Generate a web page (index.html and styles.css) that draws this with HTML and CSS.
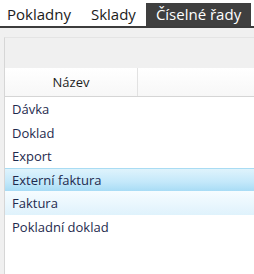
FILE: index.html
```html
<!DOCTYPE html>
<html lang="cs">
<head>
    <meta charset="UTF-8">
    <title>Číselné řady</title>
    <link rel="stylesheet" href="styles.css">
</head>
<body>

    <div class="tabs">
        <div class="tab">Pokladny</div>
        <div class="tab">Sklady</div>
        <div class="tab active">Číselné řady</div>
    </div>

    <div class="content">
        <div class="panel">
            <div class="toolbar"></div>
            <div class="header">
                <div class="col name">Název</div>
                <div class="col rest"></div>
            </div>
            <div class="rows">
                <div class="row">Dávka</div>
                <div class="row">Doklad</div>
                <div class="row">Export</div>
                <div class="row selected">Externí faktura</div>
                <div class="row hover">Faktura</div>
                <div class="row">Pokladní doklad</div>
            </div>
        </div>
    </div>

</body>
</html>
```

FILE: styles.css
```css
body {
    margin: 0;
    width: 254px;
    height: 274px;
    overflow: hidden;
    background-color: #fff;
    font-family: 'Open Sans', 'Noto Sans', sans-serif;
}
.tabs {
    display: flex;
    align-items: flex-end;
    height: 25px;
    padding-top: 1px;
    border-bottom: 2px solid #3c3c3c;
}
.tab {
    flex-shrink: 0;
    white-space: nowrap;
    height: 23px;
    line-height: 22px;
    padding: 0 10px;
    font-size: 15px;
    color: #1b1b1b;
}
.tab:first-child {
    padding-left: 7px;
}
.tab.active {
    background-color: #3f3f3f;
    color: #fff;
}
.content {
    background-color: #f0f0f0;
    padding: 9px 0 0 4px;
    height: 238px;
}
.panel {
    height: 100%;
    border-top: 1px solid #e4e4e4;
    border-left: 1px solid #d6d6d6;
    background-color: #fff;
}
.toolbar {
    height: 30px;
    background-color: #f0f0f0;
}
.header {
    display: flex;
    height: 28px;
    background: linear-gradient(#fff, #f7f7f7);
    border-bottom: 1px solid #d5d5d5;
}
.col {
    line-height: 28px;
    font-size: 13px;
    color: #1e1e1e;
}
.col.name {
    width: 132px;
    text-align: center;
    border-right: 1px solid #e2e2e2;
}
.row {
    height: 23.5px;
    padding-top: 2px;
    line-height: 21px;
    padding-left: 7px;
    font-size: 13px;
    color: #1e2a4e;
    box-sizing: border-box;
}
.row.selected {
    border-top: 1px solid #a9dcf3;
    padding-top: 1px;
    background: linear-gradient(#dff3fc, #c3e8fa 60%, #a8dcf5);
}
.row.hover {
    background: linear-gradient(#f6fcff, #dff2fc);
}
```
